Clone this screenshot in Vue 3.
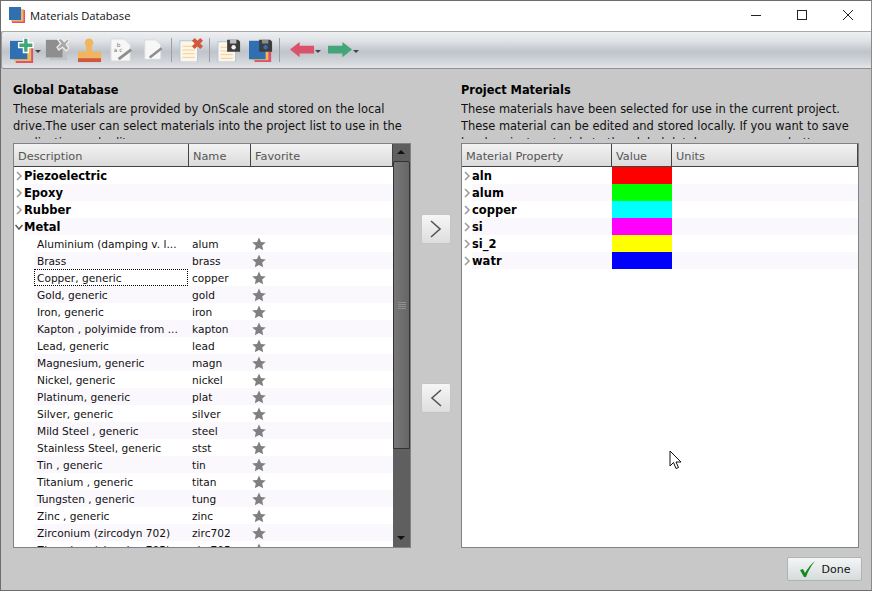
<template>
  <div class="window">
    <div class="titlebar">
      <svg class="app-icon" viewBox="0 0 16 16">
        <rect x="3" y="3" width="13" height="13" fill="#d9536b" />
        <rect x="2" y="2" width="12.5" height="12.5" fill="#f0b55f" />
        <rect x="0" y="0" width="12" height="13" fill="#2f70b2" />
      </svg>
      <span class="title">Materials Database</span>
      <div class="win-controls">
        <svg viewBox="0 0 46 30"><path d="M18 15.5h10" stroke="#222" fill="none" /></svg>
        <svg viewBox="0 0 46 30"><rect x="18.5" y="10.5" width="9" height="9" stroke="#222" fill="none" /></svg>
        <svg viewBox="0 0 46 30"><path d="M18 10l10 10M28 10l-10 10" stroke="#222" fill="none" /></svg>
      </div>
    </div>

    <div class="toolbar">
      <!-- new material -->
      <button class="tool first">
        <svg viewBox="0 0 26 26">
          <rect x="6" y="9" width="18" height="17" fill="#d9536b" />
          <rect x="4" y="7" width="18" height="17" fill="#f0b55f" />
          <rect x="0" y="3" width="18" height="19" fill="#2f70b2" />
          <path d="M14 0h5v5h5v5h-5v5h-5v-5H9V5h5z" fill="#3fa877" stroke="#fff" stroke-width="1.5" />
        </svg>
        <i class="caret"></i>
      </button>
      <!-- delete material -->
      <button class="tool">
        <svg viewBox="0 0 26 26">
          <rect x="5" y="6" width="19" height="18" fill="#c2c2c2" />
          <rect x="1" y="2" width="18" height="19" fill="#8e8e8e" />
          <path d="M14 2l3-2 4 4 4-4 1 3-3 4 3 4-3 3-4-4-4 3-2-3 4-4z" fill="#a9a9a9" stroke="#f0f0f0" stroke-width="1.4" />
        </svg>
      </button>
      <!-- stamp -->
      <button class="tool w25">
        <svg viewBox="0 0 26 26">
          <circle cx="12.5" cy="5" r="4.5" fill="#f0b55f" />
          <rect x="9.5" y="8" width="6" height="7" fill="#f0b55f" />
          <rect x="1" y="14" width="24" height="7" rx="1" fill="#f0b55f" />
          <rect x="1" y="21" width="24" height="4" fill="#d3573a" />
        </svg>
      </button>
      <!-- document with text, pencil -->
      <button class="tool w25">
        <svg viewBox="0 0 26 26">
          <path d="M1 1h14l6 6v17H1z" fill="#f7f7f7" stroke="#d8d8d8" />
          <text x="7" y="9" class="tiny">b</text>
          <text x="4" y="15" class="tiny">a c</text>
          <path d="M9 22l13-10" stroke="#8e8e8e" stroke-width="3" />
        </svg>
      </button>
      <!-- document, pencil -->
      <button class="tool w22">
        <svg viewBox="0 0 26 26">
          <path d="M2 1h13l6 6v17H2z" fill="#f7f7f7" stroke="#d8d8d8" />
          <path d="M8 22l14-11" stroke="#8e8e8e" stroke-width="3" />
        </svg>
      </button>
      <i class="sep"></i>
      <!-- remove from list -->
      <button class="tool">
        <svg viewBox="0 0 26 26">
          <rect x="1" y="3" width="19" height="23" fill="#fdf6e8" stroke="#a9c4e4" />
          <path d="M4 9h13M4 13h13M4 17h13M4 21h13" stroke="#f4c98a" />
          <path d="M14 3l3-3 3 3 3-3 3 3-3 3 3 3-3 3-3-3-3 3-3-3 3-3z" fill="#d3573a" />
        </svg>
      </button>
      <i class="sep"></i>
      <!-- save list -->
      <button class="tool">
        <svg viewBox="0 0 26 26">
          <rect x="1" y="4" width="19" height="22" fill="#fdf6e8" stroke="#a9c4e4" />
          <path d="M4 10h13M4 14h13M4 18h13M4 22h13" stroke="#f4c98a" />
          <path d="M11 2h12l2 2v11H11z" fill="#3d3d3d" />
          <rect x="14" y="2" width="7" height="4" fill="#bdbdbd" />
          <circle cx="18" cy="10" r="2.4" fill="#f2f2f2" />
        </svg>
      </button>
      <!-- save stack -->
      <button class="tool">
        <svg viewBox="0 0 26 26">
          <rect x="6" y="7" width="18" height="19" fill="#d9536b" />
          <rect x="3" y="5" width="18" height="19" fill="#f0b55f" />
          <rect x="0" y="3" width="18" height="20" fill="#2f70b2" />
          <path d="M11 2h12l2 2v11H11z" fill="#3d3d3d" />
          <rect x="14" y="2" width="7" height="4" fill="#8b8b8b" />
          <circle cx="18" cy="10" r="2.4" fill="#2f70b2" />
        </svg>
      </button>
      <i class="sep last"></i>
      <button class="tool arrow">
        <svg viewBox="0 0 26 20">
          <path d="M0 10L10 2v4h15v8H10v4z" fill="#d9536b" />
        </svg>
        <i class="caret"></i>
      </button>
      <button class="tool arrow">
        <svg viewBox="0 0 26 20">
          <path d="M25 10L15 2v4H0v8h15v4z" fill="#43a578" />
        </svg>
        <i class="caret"></i>
      </button>
    </div>

    <div class="content">
      <section class="panel">
        <h2>Global Database</h2>
        <p class="desc">These materials are provided by OnScale and stored on the local drive.The user can select materials into the project list to use in the application and edit</p>
        <div class="table">
          <div class="table-main">
            <div class="thead">
              <span class="th c-desc">Description</span>
              <span class="th c-name">Name</span>
              <span class="th c-fav">Favorite</span>
            </div>
            <div class="tbody">
              <div v-for="(g, i) in groups" :key="g" class="row group" :class="{ alt: i % 2 }">
                <svg class="chev" viewBox="0 0 8 12"><path d="M2 2l4 4-4 4" /></svg>
                <b>{{ g }}</b>
              </div>
              <div class="row group alt">
                <svg class="chev" viewBox="0 0 8 12"><path d="M0.5 4l3.5 4 3.5-4" class="dark" /></svg>
                <b>Metal</b>
              </div>
              <div v-for="(m, i) in metals" :key="m[1]" class="row child" :class="{ alt: i % 2 }">
                <span class="c-desc cell" :class="{ focus: m[1] === 'copper' }">{{ m[0] }}</span>
                <span class="c-name cell">{{ m[1] }}</span>
                <span class="c-fav cell">
                  <svg class="star" viewBox="0 0 14 14"><path d="M7 0.5l2 4.4 4.8.5-3.6 3.2 1 4.7L7 10.9l-4.2 2.4 1-4.7L.2 5.4 5 4.9z" /></svg>
                </span>
              </div>
            </div>
          </div>
          <div class="scrollbar">
            <i class="sb-up"></i>
            <div class="thumb">
              <i class="grip"></i>
            </div>
            <i class="sb-down"></i>
          </div>
        </div>
      </section>

      <div class="transfer">
        <button class="move">
          <svg viewBox="0 0 14 20" width="14" height="20"><path d="M2 2l9 8-9 8" /></svg>
        </button>
        <button class="move">
          <svg viewBox="0 0 14 20" width="14" height="20"><path d="M12 2l-9 8 9 8" /></svg>
        </button>
      </div>

      <section class="panel">
        <h2>Project Materials</h2>
        <p class="desc">These materials have been selected for use in the current project. These material can be edited and stored locally. If you want to save local project materials to the global database, use arrow button</p>
        <div class="table">
          <div class="table-main">
            <div class="thead">
              <span class="th p-prop">Material Property</span>
              <span class="th p-val">Value</span>
              <span class="th p-unit">Units</span>
            </div>
            <div class="tbody">
              <div v-for="(p, i) in project" :key="p.name" class="row group" :class="{ alt: i % 2 }">
                <div class="prop-cell">
                  <svg class="chev" viewBox="0 0 8 12"><path d="M2 2l4 4-4 4" /></svg>
                  <b>{{ p.name }}</b>
                </div>
                <div class="swatch" :style="{ background: p.color }"></div>
              </div>
            </div>
          </div>
        </div>
      </section>
    </div>

    <div class="footer">
      <button class="done">
        <svg viewBox="0 0 18 18" width="18" height="18"><path d="M1 10l3-1 2 4C9 8 12 4 16 1 12 6 9 11 7 17H5z" fill="#118a18" /></svg>
        <span>Done</span>
      </button>
    </div>

    <svg class="cursor" viewBox="0 0 13 20" width="13" height="20">
      <path d="M1 1v15l3.5-3.5 2.5 6 2.5-1-2.5-5.5h5z" fill="#fff" stroke="#111" />
    </svg>
  </div>
</template>

<script setup>
const groups = ["Piezoelectric", "Epoxy", "Rubber"];

const metals = [
  ["Aluminium (damping v. l...", "alum"],
  ["Brass", "brass"],
  ["Copper, generic", "copper"],
  ["Gold, generic", "gold"],
  ["Iron, generic", "iron"],
  ["Kapton , polyimide from ...", "kapton"],
  ["Lead, generic", "lead"],
  ["Magnesium, generic", "magn"],
  ["Nickel, generic", "nickel"],
  ["Platinum, generic", "plat"],
  ["Silver, generic", "silver"],
  ["Mild Steel , generic", "steel"],
  ["Stainless Steel, generic", "stst"],
  ["Tin , generic", "tin"],
  ["Titanium , generic", "titan"],
  ["Tungsten , generic", "tung"],
  ["Zinc , generic", "zinc"],
  ["Zirconium (zircodyn 702)", "zirc702"],
  ["Zirconium (zircodyn 705)", "zirc705"]
];

const project = [
  { name: "aln", color: "#ff0000" },
  { name: "alum", color: "#00ff00" },
  { name: "copper", color: "#00ffff" },
  { name: "si", color: "#ff00ff" },
  { name: "si_2", color: "#ffff00" },
  { name: "watr", color: "#0000ff" }
];
</script>

<style>
html,
body {
  margin: 0;
  background: #c8c8c8;
}
</style>

<style scoped>
.window {
  position: relative;
  width: 872px;
  height: 591px;
  box-sizing: border-box;
  border: 1px solid #6d6d6d;
  border-right-color: #8a8a8a;
  background: #c8c8c8;
  display: flex;
  flex-direction: column;
  overflow: hidden;
  font-family: "DejaVu Sans", sans-serif;
  font-size: 11px;
  color: #000;
}

button {
  font: inherit;
  padding: 0;
  background: none;
  border: none;
}

/* Title bar */
.titlebar {
  height: 30px;
  flex: none;
  background: #fff;
  display: flex;
  align-items: center;
  padding: 0 0 2px 8px;
  box-sizing: border-box;
}

.app-icon {
  width: 16px;
  height: 16px;
  margin-right: 5px;
}

.title {
  font-family: "Open Sans", sans-serif;
  font-size: 11.2px;
  color: #111;
}

.win-controls {
  margin-left: auto;
  display: flex;
}

.win-controls svg {
  width: 46px;
  height: 30px;
}

/* Toolbar */
.toolbar {
  height: 38px;
  flex: none;
  box-sizing: border-box;
  display: flex;
  align-items: center;
  padding-left: 8px;
  border-top: 1px solid #a9a9a9;
  border-bottom: 1px solid #8f8f8f;
  border-left: 1px solid #999;
  border-radius: 3px 0 0 3px;
  background: linear-gradient(#eef0f2 0%, #dfe2e6 25%, #bfc4ca 55%, #d4d7db 85%, #e4e6e8 100%);
}

.tool {
  width: 24px;
  height: 26px;
  margin-right: 8px;
  flex: none;
  position: relative;
  display: flex;
  align-items: center;
}

.tool svg {
  width: 100%;
  display: block;
}

.tool.first {
  width: 25px;
  margin-right: 10px;
}

.tool.w25 {
  width: 25px;
}

.tool.w22 {
  width: 22px;
}

.tool .tiny {
  font-size: 6px;
  fill: #777;
}

.caret {
  position: absolute;
  left: 25px;
  top: 13px;
  border-left: 3px solid transparent;
  border-right: 3px solid transparent;
  border-top: 3px solid #444;
}

.tool.arrow {
  width: 25px;
  margin-right: 13px;
}

.sep {
  width: 1px;
  height: 24px;
  background: #9aa0a6;
  margin: 0 7px 0 -2px;
  flex: none;
}

.sep.last {
  margin-right: 10px;
}

/* Main area */
.content {
  flex: 1;
  min-height: 0;
  display: flex;
  padding: 13px 12px 0 12px;
}

.panel {
  width: 398px;
  flex: none;
  display: flex;
  flex-direction: column;
}

h2 {
  margin: 0 0 3px;
  flex: none;
  font-size: 11.4px;
  line-height: 16px;
  font-weight: bold;
  color: #000;
}

.desc {
  margin: 0;
  height: 38px;
  flex: none;
  overflow: hidden;
  line-height: 17px;
  font-size: 11.45px;
  color: #111;
}

.transfer {
  width: 50px;
  flex: none;
  box-sizing: border-box;
  padding: 132px 0 0 10px;
  display: flex;
  flex-direction: column;
  gap: 139px;
}

.move {
  width: 30px;
  height: 30px;
  box-sizing: border-box;
  border: 1px solid #c4c4c4;
  border-radius: 2px;
  background: linear-gradient(#f6f6f6, #dedede);
  display: flex;
  align-items: center;
  justify-content: center;
}

.move path {
  fill: none;
  stroke: #555;
  stroke-width: 1.6;
}

/* Tables */
.table {
  margin-top: 4px;
  height: 405px;
  flex: none;
  display: flex;
  box-sizing: border-box;
  border: 1px solid #80828a;
  background: #fff;
}

.table-main {
  flex: 1;
  min-width: 0;
  min-height: 0;
  display: flex;
  flex-direction: column;
}

.thead {
  height: 23px;
  flex: none;
  box-sizing: border-box;
  display: flex;
  background: linear-gradient(#f3f3f3, #dbdbdb);
  border-bottom: 1px solid #444;
}

.th {
  box-sizing: border-box;
  padding: 5px 0 0 4px;
  font-size: 11.3px;
  line-height: 16px;
  color: #555;
  border-right: 1px solid #444;
}

.tbody {
  flex: 1;
  min-height: 0;
  overflow: hidden;
}

.c-desc {
  width: 175px;
}

.c-name {
  width: 62px;
}

.c-fav {
  flex: 1;
}

.p-prop {
  width: 150px;
}

.p-val {
  width: 60px;
}

.p-unit {
  flex: 1;
}

.row {
  height: 17px;
  display: flex;
  align-items: center;
  line-height: 17px;
}

.row.group {
  padding-left: 1px;
  font-size: 11.5px;
}

.row.group b {
  padding-top: 2px;
}

.row.group.alt {
  background: linear-gradient(to right, #fff 10px, #faf8fc 10px);
}

.row.child {
  padding-left: 20px;
  font-size: 10.6px;
  color: #111;
}

.row.child.alt {
  background: linear-gradient(to right, #fff 20px, #faf8fc 20px);
}

.chev {
  width: 8px;
  height: 12px;
  margin: 1px 1px 0 0;
  flex: none;
}

.chev path {
  fill: none;
  stroke: #999;
  stroke-width: 1.5;
}

.chev path.dark {
  stroke: #555;
}

.cell {
  box-sizing: border-box;
  height: 17px;
  padding: 1px 0 0 3px;
  white-space: nowrap;
  overflow: hidden;
}

.row .c-desc {
  width: 154px;
}

.row .c-name {
  width: 61px;
  padding-left: 4px;
}

.focus {
  outline: 1px dotted #000;
  outline-offset: -1px;
}

.star {
  width: 14px;
  height: 14px;
  margin: 1px 0 0 0;
  display: block;
}

.star path {
  fill: #808080;
}

/* Scrollbar */
.scrollbar {
  width: 17px;
  flex: none;
  box-sizing: border-box;
  display: flex;
  flex-direction: column;
  background: #5f5f5f;
  position: relative;
}

.sb-up,
.sb-down {
  display: block;
  height: 17px;
  flex: none;
  position: relative;
}

.sb-up::after,
.sb-down::after {
  content: "";
  position: absolute;
  left: 4px;
  border-left: 4px solid transparent;
  border-right: 4px solid transparent;
}

.sb-up::after {
  top: 6px;
  border-bottom: 4px solid #111;
}

.sb-down {
  margin-top: auto;
}

.sb-down::after {
  top: 6px;
  border-top: 4px solid #111;
}

.thumb {
  height: 288px;
  flex: none;
  box-sizing: border-box;
  border: 1px solid #333;
  border-radius: 2px 2px 0 0;
  background: linear-gradient(to right, #777, #666);
  display: flex;
  align-items: center;
  justify-content: center;
}

.grip {
  width: 8px;
  height: 7px;
  background: repeating-linear-gradient(#8f8f8f 0 1px, transparent 1px 2px);
}

.prop-cell {
  box-sizing: border-box;
  display: flex;
  align-items: center;
  width: 149px;
  height: 17px;
  flex: none;
}

.swatch {
  width: 60px;
  height: 17px;
  flex: none;
}

/* Footer */
.footer {
  height: 42px;
  flex: none;
  box-sizing: border-box;
  display: flex;
  justify-content: flex-end;
  padding: 9px 9px 0 0;
}

.done {
  width: 75px;
  height: 24px;
  box-sizing: border-box;
  border: 1px solid #aeb4b6;
  border-radius: 2px;
  background: linear-gradient(#f4f6f6, #d6dbdc);
  display: flex;
  align-items: center;
  justify-content: center;
  gap: 5px;
  font-size: 11px;
  color: #111;
}

.cursor {
  position: absolute;
  left: 668px;
  top: 449px;
}
</style>
